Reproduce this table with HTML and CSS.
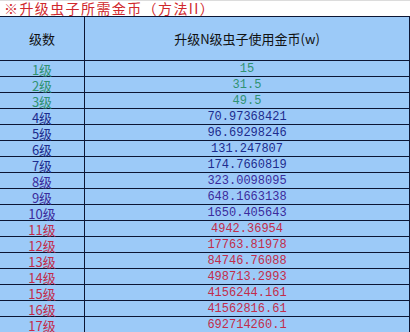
FILE: index.html
```html
<!DOCTYPE html>
<html lang="zh">
<head>
<meta charset="utf-8">
<link rel="stylesheet" href="styles.css">
</head>
<body>
<div class="title">※升级虫子所需金币（方法II）</div>
<div class="sheet">
  <div class="cell head c1">级数</div>
  <div class="cell head c2">升级N级虫子使用金币(w)</div>

  <div class="cell c1 green">1级</div><div class="cell c2 num green">15</div>
  <div class="cell c1 green">2级</div><div class="cell c2 num green">31.5</div>
  <div class="cell c1 green">3级</div><div class="cell c2 num green">49.5</div>
  <div class="cell c1 blue">4级</div><div class="cell c2 num blue">70.97368421</div>
  <div class="cell c1 blue">5级</div><div class="cell c2 num blue">96.69298246</div>
  <div class="cell c1 blue">6级</div><div class="cell c2 num blue">131.247807</div>
  <div class="cell c1 blue">7级</div><div class="cell c2 num blue">174.7660819</div>
  <div class="cell c1 purple">8级</div><div class="cell c2 num purple">323.0098095</div>
  <div class="cell c1 purple">9级</div><div class="cell c2 num purple">648.1663138</div>
  <div class="cell c1 purple">10级</div><div class="cell c2 num purple">1650.405643</div>
  <div class="cell c1 red">11级</div><div class="cell c2 num red">4942.36954</div>
  <div class="cell c1 red">12级</div><div class="cell c2 num red">17763.81978</div>
  <div class="cell c1 red">13级</div><div class="cell c2 num red">84746.76088</div>
  <div class="cell c1 red">14级</div><div class="cell c2 num red">498713.2993</div>
  <div class="cell c1 red">15级</div><div class="cell c2 num red">4156244.161</div>
  <div class="cell c1 red">16级</div><div class="cell c2 num red">41562816.61</div>
  <div class="cell c1 red">17级</div><div class="cell c2 num red">692714260.1</div>
</div>
</body>
</html>
```
FILE: styles.css
```css
html, body {
  margin: 0;
  padding: 0;
  background: #ffffff;
  width: 410px;
  height: 332px;
  overflow: hidden;
}

body {
  font-family: "Noto Sans CJK SC", "Liberation Sans", sans-serif;
}

.title {
  box-sizing: border-box;
  height: 16px;
  border-top: 1px solid #dcdcdc;
  padding-left: 4px;
  font-size: 14px;
  line-height: 15px;
  letter-spacing: 1.4px;
  color: #d0282c;
  white-space: nowrap;
}

.sheet {
  display: grid;
  grid-template-columns: 85px 325px;
  border-top: 1px solid #0c1634;
  background: #9ccaf8;
}

.cell {
  box-sizing: border-box;
  height: 16px;
  padding-top: 1px;
  border-bottom: 1px solid #0c1634;
  font-size: 13px;
  line-height: 15px;
  text-align: center;
  white-space: nowrap;
}

.c1 {
  border-right: 1px solid #0c1634;
}

.c2 {
  border-right: 1px solid #0c1634;
}

.head {
  height: 44px;
  padding-top: 0;
  line-height: 43px;
  color: #111111;
}

.num {
  font-family: "Liberation Mono", "DejaVu Sans Mono", monospace;
  font-size: 12px;
}

.green { color: #2f9272; }
.blue { color: #1c2c8e; }
.purple { color: #3b2b9c; }
.red { color: #c22c4a; }
```
